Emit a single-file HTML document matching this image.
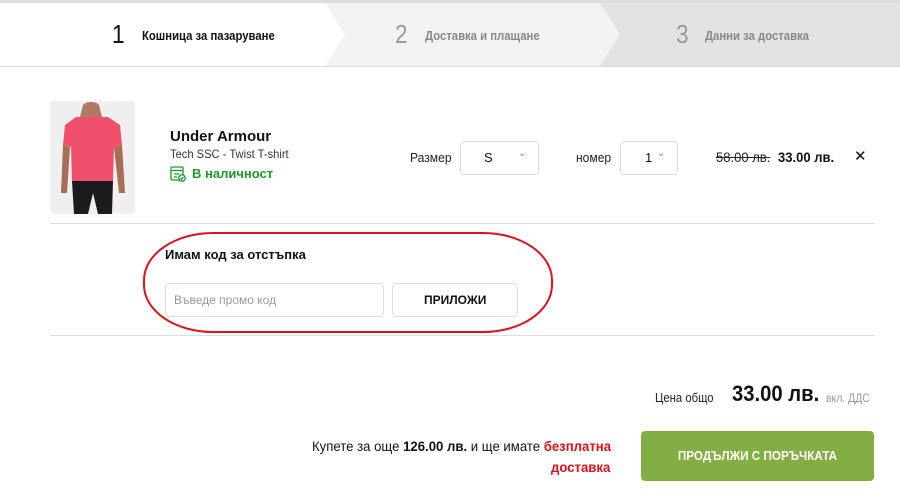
<!DOCTYPE html>
<html><head><meta charset="utf-8"><style>
*{margin:0;padding:0;box-sizing:border-box}
body{width:900px;height:490px;background:#fff;font-family:"Liberation Sans",sans-serif;position:relative;overflow:hidden;color:#111}
.a{position:absolute;white-space:nowrap}
.n{transform:scaleX(0.87);transform-origin:0 0}
.box{position:absolute;border:1px solid #ddd;border-radius:4px;background:#fff}
</style></head><body>
<div class="a" style="left:0;top:0;width:900px;height:3px;background:#ddd"></div>
<svg class="a" style="left:0;top:3px" width="900" height="63">
<rect x="0" y="0" width="900" height="63" fill="#e2e2e2"/>
<polygon points="0,0 600,0 620,31.5 600,63 0,63" fill="#f2f2f2"/>
<polygon points="0,0 325,0 345,31.5 325,63 0,63" fill="#fff"/>
</svg>
<div class="a" style="left:0;top:66px;width:900px;height:1px;background:#ddd"></div>
<div class="a n" style="left:112px;top:19px;font-size:26px;color:#111">1</div>
<div class="a n" style="left:142px;top:28px;font-size:13px;font-weight:bold;color:#111">Кошница за пазаруване</div>
<div class="a n" style="left:395px;top:19px;font-size:26px;color:#999">2</div>
<div class="a n" style="left:425px;top:28px;font-size:13px;font-weight:bold;color:#888">Доставка и плащане</div>
<div class="a n" style="left:676px;top:19px;font-size:26px;color:#999">3</div>
<div class="a n" style="left:705px;top:28px;font-size:13px;font-weight:bold;color:#888">Данни за доставка</div>

<svg class="a" style="left:50px;top:101px" width="85" height="113">
<rect width="85" height="113" rx="4" fill="#efefef"/>
<path d="M33,4 C36,0 46,0 49,4 L52,16 L30,16Z" fill="#b07a62"/>
<path d="M26,16 L58,16 L70,24 L72,44 L64,46 L63,80 L22,80 L21,46 L13,44 L15,24Z" fill="#f0506a"/>
<path d="M22,80 L63,80 L62,113 L48,113 L43,92 L38,113 L24,113Z" fill="#1c1c1e"/>
<path d="M13,44 L20,46 L17,92 L11,92Z M64,46 L72,44 L75,92 L69,92Z" fill="#a86d56"/>
</svg>
<div class="a" style="left:170px;top:128px;font-size:15px;font-weight:bold">Under Armour</div>
<div class="a" style="left:170px;top:147px;font-size:12px;color:#333;transform:scaleX(.93);transform-origin:0 0">Tech SSC - Twist T-shirt</div>
<svg class="a" style="left:170px;top:166px" width="16" height="16" viewBox="0 0 16 16" fill="none" stroke="#1a9a2a" stroke-width="1.3"><rect x="1" y="1" width="12" height="13" rx="1"/><path d="M1,4.5 H13 M4,8 H9 M4,11 H7"/><circle cx="12" cy="12" r="3.2" fill="#fff"/><path d="M10.5,12 L11.7,13.2 L13.5,11"/></svg>
<div class="a" style="left:192px;top:166px;font-size:13px;font-weight:bold;color:#1a9a2a">В наличност</div>

<div class="a" style="left:410px;top:150px;font-size:13px;color:#222;transform:scaleX(.93);transform-origin:0 0">Размер</div>
<div class="box" style="left:460px;top:141px;width:79px;height:34px"></div>
<div class="a" style="left:484px;top:150px;font-size:13px">S</div>
<div class="a" style="left:518px;top:148px;font-size:10px;color:#888">&#8964;</div>
<div class="a" style="left:576px;top:150px;font-size:13px;color:#222;transform:scaleX(.93);transform-origin:0 0">номер</div>
<div class="box" style="left:620px;top:141px;width:58px;height:34px"></div>
<div class="a" style="left:645px;top:150px;font-size:13px">1</div>
<div class="a" style="left:657px;top:148px;font-size:10px;color:#888">&#8964;</div>
<div class="a" style="left:716px;top:149px;font-size:14px;text-decoration:line-through;color:#222;transform:scaleX(.93);transform-origin:0 0">58.00 лв.</div>
<div class="a" style="left:778px;top:149px;font-size:14px;font-weight:bold;transform:scaleX(.93);transform-origin:0 0">33.00 лв.</div>
<div class="a" style="left:854px;top:147px;font-size:15px">✕</div>

<div class="a" style="left:50px;top:223px;width:825px;height:1px;background:#ddd"></div>
<div class="a" style="left:50px;top:335px;width:825px;height:1px;background:#ddd"></div>

<div class="a" style="left:143px;top:232px;width:410px;height:101px;border:2px solid #e0101a;border-radius:70px/48px"></div>
<div class="a" style="left:165px;top:247px;font-size:13px;font-weight:bold">Имам код за отстъпка</div>
<div class="box" style="left:165px;top:283px;width:219px;height:34px"></div>
<div class="a" style="left:174px;top:293px;font-size:12px;color:#999">Въведе промо код</div>
<div class="box" style="left:392px;top:283px;width:126px;height:34px"></div>
<div class="a" style="left:424px;top:293px;font-size:12px;font-weight:bold">ПРИЛОЖИ</div>

<div class="a n" style="left:655px;top:390px;font-size:13px;color:#222">Цена общо</div>
<div class="a" style="left:732px;top:381px;font-size:22px;font-weight:bold;transform:scaleX(.92);transform-origin:0 0">33.00 лв.</div>
<div class="a n" style="left:826px;top:391px;font-size:12px;color:#999">вкл. ДДС</div>

<div class="a" style="left:312px;top:438px;font-size:14px;color:#111;transform:scaleX(.94);transform-origin:0 0">Купете за още <b>126.00 лв.</b> и ще имате <span style="color:#e0101a;font-weight:bold">безплатна</span></div>
<div class="a" style="left:551px;top:459px;font-size:14px;font-weight:bold;color:#e0101a;transform:scaleX(.94);transform-origin:0 0">доставка</div>
<div class="a" style="left:641px;top:431px;width:233px;height:50px;background:#84ad44;border-radius:4px"></div>
<div class="a" style="left:641px;top:448px;width:233px;text-align:center;font-size:13px;font-weight:bold;color:#fff"><span style="display:inline-block;transform:scaleX(.9)">ПРОДЪЛЖИ С ПОРЪЧКАТА</span></div>
</body></html>
